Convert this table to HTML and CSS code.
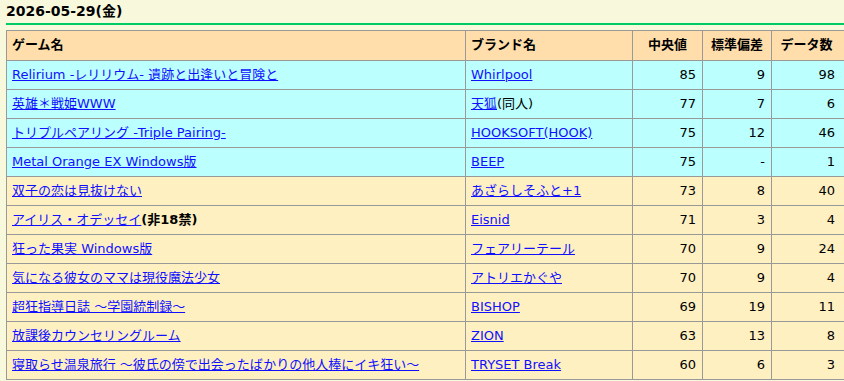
FILE: index.html
```html
<!DOCTYPE html>
<html lang="ja">
<head>
<meta charset="utf-8">
<title>2026-05-29</title>
<link rel="stylesheet" href="styles.css">
</head>
<body>
<h2 class="date">2026-05-29(金)</h2>
<table class="rank">
  <colgroup>
    <col class="c-game">
    <col class="c-brand">
    <col class="c-num">
    <col class="c-num2">
    <col class="c-cnt">
  </colgroup>
  <thead>
    <tr>
      <th class="left">ゲーム名</th>
      <th class="left">ブランド名</th>
      <th>中央値</th>
      <th>標準偏差</th>
      <th class="last">データ数</th>
    </tr>
  </thead>
  <tbody>
    <tr class="hot">
      <td><a href="#">Relirium -レリリウム- 遺跡と出逢いと冒険と</a></td>
      <td><a href="#">Whirlpool</a></td>
      <td class="num">85</td><td class="num">9</td><td class="num last">98</td>
    </tr>
    <tr class="hot">
      <td><a href="#">英雄＊戦姫WWW</a></td>
      <td class="plain"><a href="#">天狐</a>(同人)</td>
      <td class="num">77</td><td class="num">7</td><td class="num last">6</td>
    </tr>
    <tr class="hot">
      <td><a href="#">トリプルペアリング -Triple Pairing-</a></td>
      <td><a href="#">HOOKSOFT(HOOK)</a></td>
      <td class="num">75</td><td class="num">12</td><td class="num last">46</td>
    </tr>
    <tr class="hot">
      <td><a href="#">Metal Orange EX Windows版</a></td>
      <td><a href="#">BEEP</a></td>
      <td class="num">75</td><td class="num">-</td><td class="num last">1</td>
    </tr>
    <tr>
      <td><a href="#">双子の恋は見抜けない</a></td>
      <td><a href="#">あざらしそふと+1</a></td>
      <td class="num">73</td><td class="num">8</td><td class="num last">40</td>
    </tr>
    <tr>
      <td><a href="#">アイリス・オデッセイ</a><b class="note">(非18禁)</b></td>
      <td><a href="#">Eisnid</a></td>
      <td class="num">71</td><td class="num">3</td><td class="num last">4</td>
    </tr>
    <tr>
      <td><a href="#">狂った果実 Windows版</a></td>
      <td><a href="#">フェアリーテール</a></td>
      <td class="num">70</td><td class="num">9</td><td class="num last">24</td>
    </tr>
    <tr>
      <td><a href="#">気になる彼女のママは現役魔法少女</a></td>
      <td><a href="#">アトリエかぐや</a></td>
      <td class="num">70</td><td class="num">9</td><td class="num last">4</td>
    </tr>
    <tr>
      <td><a href="#">超狂指導日誌 ～学園統制録～</a></td>
      <td><a href="#">BISHOP</a></td>
      <td class="num">69</td><td class="num">19</td><td class="num last">11</td>
    </tr>
    <tr>
      <td><a href="#">放課後カウンセリングルーム</a></td>
      <td><a href="#">ZION</a></td>
      <td class="num">63</td><td class="num">13</td><td class="num last">8</td>
    </tr>
    <tr>
      <td><a href="#">寝取らせ温泉旅行 ～彼氏の傍で出会ったばかりの他人棒にイキ狂い～</a></td>
      <td><a href="#">TRYSET Break</a></td>
      <td class="num">60</td><td class="num">6</td><td class="num last">3</td>
    </tr>
  </tbody>
</table>
</body>
</html>
```

FILE: styles.css
```css
html {
  overflow: hidden;
}
body {
  margin: 0;
  padding: 0 0 0 6px;
  background: #f8f8dc;
  font-family: "DejaVu Sans", "Noto Sans CJK JP", sans-serif;
  font-size: 13px;
  color: #000;
}
.date {
  margin: 0;
  padding: 3px 0 3px 0;
  font-size: 14px;
  line-height: 17px;
  font-weight: bold;
  border-bottom: 2px solid #00cc66;
}
.rank {
  margin-top: 5px;
  border-collapse: collapse;
  table-layout: fixed;
  width: 850px;
}
.c-game { width: 459px; }
.c-brand { width: 167px; }
.c-num { width: 70px; }
.c-num2 { width: 69px; }
.c-cnt { width: 85px; }
.rank th,
.rank td {
  border: 1px solid #999;
  padding: 6px 5px;
  line-height: 16px;
  white-space: nowrap;
  overflow: hidden;
}
.rank th {
  background: #ffdeab;
  font-weight: bold;
  text-align: center;
  padding: 6px 5px 7px;
}
.rank th.left {
  text-align: left;
}
.rank th.last {
  padding-right: 20px;
}
.rank td {
  background: #fff0c2;
}
.rank tr.hot td {
  background: #bbffff;
}
.rank td.num {
  text-align: right;
  padding-right: 6px;
}
.rank td.last {
  padding-right: 21px;
}
.rank a {
  color: #1010ff;
  text-decoration: underline;
}
.note {
  font-weight: bold;
}
```
